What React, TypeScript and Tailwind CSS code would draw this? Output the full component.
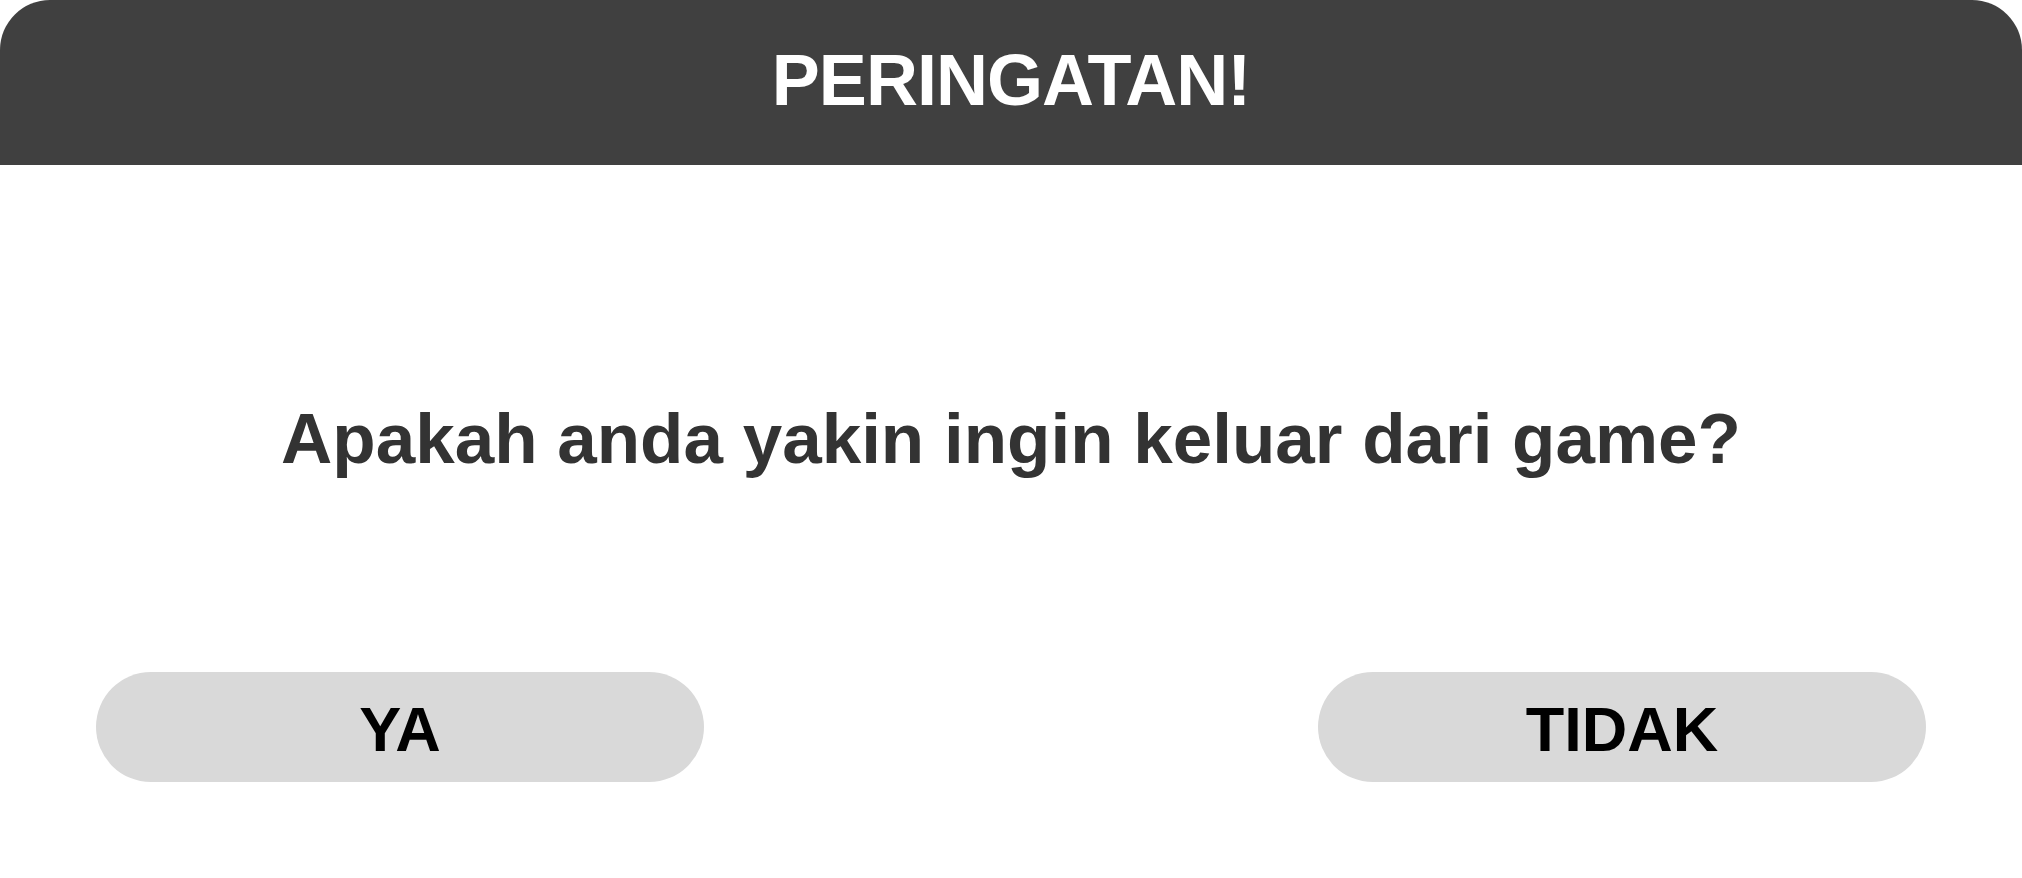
export default function App() {
  return (
    <div
      className="w-[2022px] h-[878px] bg-white flex flex-col"
      style={{ fontFamily: '"Liberation Sans", Arial, sans-serif' }}
    >
      <div className="h-[165px] shrink-0 bg-[#404040] rounded-t-[50px] flex items-center justify-center pb-[5px]">
        <h1 className="text-white font-bold text-[72px] leading-none tracking-[-1px]">PERINGATAN!</h1>
      </div>
      <div className="mt-[238px] flex justify-center">
        <p className="text-[#333333] font-bold text-[71px] leading-none">
          Apakah anda yakin ingin keluar dari game?
        </p>
      </div>
      <div className="mt-[198px] flex justify-between px-[96px]">
        <button className="w-[608px] h-[110px] rounded-full bg-[#d9d9d9] text-black font-bold text-[63px] leading-none flex items-center justify-center pt-[4px]">
          YA
        </button>
        <button className="w-[608px] h-[110px] rounded-full bg-[#d9d9d9] text-black font-bold text-[63px] leading-none flex items-center justify-center pt-[4px]">
          TIDAK
        </button>
      </div>
    </div>
  );
}
